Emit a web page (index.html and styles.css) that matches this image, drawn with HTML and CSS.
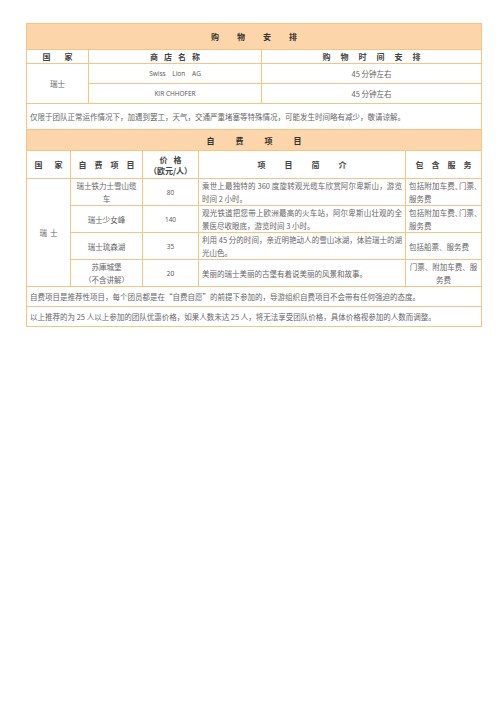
FILE: index.html
```html
<!DOCTYPE html>
<html lang="zh">
<head>
<meta charset="utf-8">
<link rel="stylesheet" href="styles.css">
</head>
<body>
<div class="doc">
  <table class="t t1">
    <colgroup><col class="c1a"><col class="c1b"><col class="c1c"></colgroup>
    <tr class="r-head"><td colspan="3" class="head"><span class="s18">购物安</span>排</td></tr>
    <tr class="r-colh">
      <td class="colh"><span class="s14">国</span>家</td>
      <td class="colh"><span class="s6">商店名</span>称</td>
      <td class="colh"><span class="s10">购物时间安</span>排</td>
    </tr>
    <tr class="r-row">
      <td rowspan="2" class="ctr">瑞士</td>
      <td class="ctr lat">Swiss&nbsp;&nbsp;&nbsp; Lion&nbsp;&nbsp;&nbsp; AG</td>
      <td class="ctr">45 分钟左右</td>
    </tr>
    <tr class="r-row">
      <td class="ctr lat">KIR CHHOFER</td>
      <td class="ctr">45 分钟左右</td>
    </tr>
    <tr class="r-note1"><td colspan="3" class="note">仅限于团队正常运作情况下，加遇到罢工，天气，交通严重堵塞等特殊情况，可能发生时间略有减少，敬请谅解。</td></tr>
  </table>
  <table class="t t2">
    <colgroup><col class="c2a"><col class="c2b"><col class="c2c"><col class="c2d"><col class="c2e"></colgroup>
    <tr class="r-head2"><td colspan="5" class="head"><span class="s21">自费项</span>目</td></tr>
    <tr class="r-colh2">
      <td class="colh"><span class="s12">国</span>家</td>
      <td class="colh"><span class="s8">自费项</span>目</td>
      <td class="colh"><span class="s6">价</span>格<br>（欧元/人）</td>
      <td class="colh"><span class="s19">项目简</span>介</td>
      <td class="colh"><span class="s8">包含服</span>务</td>
    </tr>
    <tr class="r-item">
      <td rowspan="4" class="ctr"><span class="s3">瑞</span>士</td>
      <td class="ctr">瑞士铁力士雪山缆车</td>
      <td class="ctr lat">80</td>
      <td class="desc">乘世上最独特的 360 度旋转观光缆车欣赏阿尔卑斯山，游览时间 2 小时。</td>
      <td class="svc">包括附加车费､门票､服务费</td>
    </tr>
    <tr class="r-item">
      <td class="ctr">瑞士少女峰</td>
      <td class="ctr lat">140</td>
      <td class="desc">观光铁道把您带上欧洲最高的火车站，阿尔卑斯山壮观的全景医尽收眼底，游览时间 3 小时。</td>
      <td class="svc">包括附加车费､门票､服务费</td>
    </tr>
    <tr class="r-item3">
      <td class="ctr">瑞士琉森湖</td>
      <td class="ctr lat">35</td>
      <td class="desc">利用 45 分的时间，亲近明艳动人的雪山冰湖，体验瑞士的湖光山色。</td>
      <td class="svc">包括船票、服务费</td>
    </tr>
    <tr class="r-item">
      <td class="ctr">苏庫城堡<br>（不含讲解）</td>
      <td class="ctr lat">20</td>
      <td class="desc">美丽的瑞士美丽的古堡有着说美丽的风景和故事。</td>
      <td class="svc c">门票、附加车费、服务费</td>
    </tr>
    <tr class="r-note"><td colspan="5" class="note">自费项目是推荐性项目，每个团员都是在“自费自愿”的前提下参加的，导游组织自费项目不会带有任何强迫的态度。</td></tr>
    <tr class="r-note"><td colspan="5" class="note">以上推荐的为 25 人以上参加的团队优惠价格，如果人数未达 25 人，将无法享受团队价格，具体价格视参加的人数而调整。</td></tr>
  </table>
</div>
</body>
</html>
```
FILE: styles.css
```css
html, body {
  margin: 0;
  padding: 0;
  background: #ffffff;
}
body {
  font-family: "Noto Sans CJK SC", "Noto Sans", sans-serif;
  color: #666;
}
.doc {
  margin: 23px 0 0 26px;
  width: 455px;
}
.t {
  width: 455px;
  border-collapse: collapse;
  table-layout: fixed;
  font-size: 7.5px;
  line-height: 13px;
}
.t2 {
  margin-top: -1px;
}
.t td {
  border: 1px solid #f8c47f;
  padding: 0 3px;
  vertical-align: middle;
}
.c1a { width: 62px; }
.c1b { width: 173px; }
.c1c { width: 220px; }
.c2a { width: 44px; }
.c2b { width: 72px; }
.c2c { width: 56px; }
.c2d { width: 207px; }
.c2e { width: 76px; }

.head {
  background: #fcd6aa;
  text-align: center;
  color: #333;
  font-weight: 700;
  font-size: 8px;
}
.colh {
  text-align: center;
  color: #444;
  font-weight: 700;
  font-size: 8px;
  line-height: 11px;
}
.s3 { letter-spacing: 3px; }
.s6 { letter-spacing: 6px; }
.s8 { letter-spacing: 8px; }
.s10 { letter-spacing: 10px; }
.s12 { letter-spacing: 12px; }
.s14 { letter-spacing: 14px; }
.s18 { letter-spacing: 18px; }
.s19 { letter-spacing: 19px; }
.s21 { letter-spacing: 21px; }
.ctr { text-align: center; }
.lat {
  font-family: "Open Sans", "Liberation Sans", sans-serif;
  font-size: 6.5px;
  color: #555;
}
.desc {
  text-align: justify;
  padding: 0 2px 0 3px;
}
.svc {
  text-align: justify;
  padding: 0 2px 0 3px;
}
.svc.c { text-align: center; }
.note {
  padding: 0 6px;
}
.r-head { height: 26px; }
.r-colh { height: 14px; }
.r-row { height: 20px; }
.r-note1 { height: 26px; }
.r-head2 { height: 21px; }
.r-colh2 { height: 28px; }
.r-item { height: 26px; }
.r-item3 { height: 27px; }
.r-note { height: 20px; }
```
